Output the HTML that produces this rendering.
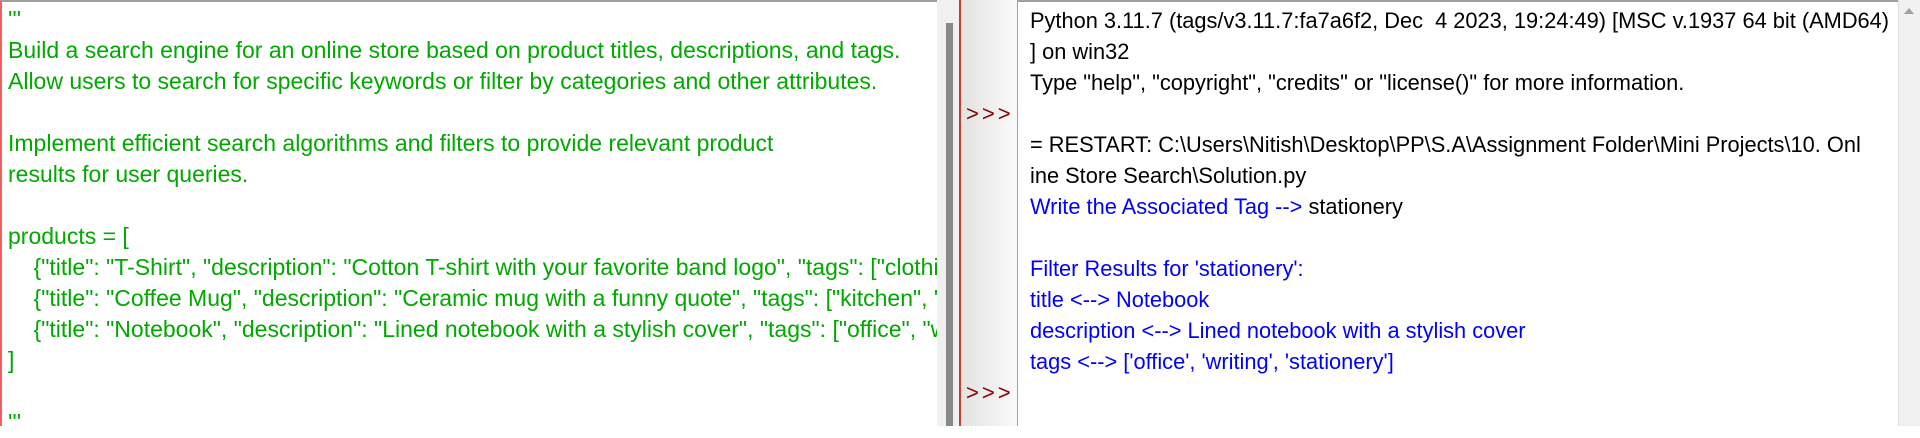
<!DOCTYPE html>
<html><head><meta charset="utf-8"><style>
html,body{margin:0;padding:0;width:1920px;height:426px;overflow:hidden;background:#fff;font-family:"Liberation Sans",sans-serif;font-size:21.8px}
.l{position:absolute;left:0;top:0;width:937px;height:426px;background:#fff;border-top:2px solid #a0a0a0;box-sizing:border-box;border-left:2px solid #f06060}
.ls{position:absolute;left:937px;top:0;width:23px;height:426px;background:#f0f0f0}
.th{position:absolute;left:946px;top:23px;width:7px;height:403px;background:#888}
.red{position:absolute;left:959px;top:0;width:2px;height:426px;background:#c04030}
.g{position:absolute;left:961px;top:0;width:56px;height:426px;background:linear-gradient(90deg,#e2e2e2,#fafafa)}
.bd{position:absolute;left:1017px;top:0;width:1px;height:426px;background:#a0a0a0}
.r{position:absolute;left:1018px;top:0;width:880px;height:426px;background:#fff;border-top:2px solid #a0a0a0;box-sizing:border-box}
.rs{position:absolute;left:1898px;top:0;width:22px;height:426px;background:#f0f0f0;border-left:1px solid #ddd}
.txt{position:absolute;white-space:pre;line-height:31px}
.gr{color:#00a800}.bl{color:#0000ff}.bk{color:#000}
.p{position:absolute;left:966px;color:#8b0000;font-size:22px;letter-spacing:3px;line-height:31px}
</style></head><body>
<div class="l"></div><div class="ls"></div><div class="th"></div><div class="red"></div><div class="g"></div><div class="bd"></div><div class="r"></div><div class="rs"></div>
<svg style="position:absolute;left:1902px;top:6px" width="14" height="10"><path d="M2 8 L7 2 L12 8Z" fill="#a0a0a0"/></svg>
<div class="txt gr" style="left:8px;top:4px;width:929px;overflow:hidden;font-size:23px">'''
Build a search engine for an online store based on product titles, descriptions, and tags.
Allow users to search for specific keywords or filter by categories and other attributes.

Implement efficient search algorithms and filters to provide relevant product
results for user queries.

products = [
    {"title": "T-Shirt", "description": "Cotton T-shirt with your favorite band logo", "tags": ["clothing", "music"]},
    {"title": "Coffee Mug", "description": "Ceramic mug with a funny quote", "tags": ["kitchen", "humor"]},
    {"title": "Notebook", "description": "Lined notebook with a stylish cover", "tags": ["office", "writing", "stationery"]},
]

'''</div>
<div class="txt bk" style="left:1030px;top:5px">Python 3.11.7 (tags/v3.11.7:fa7a6f2, Dec  4 2023, 19:24:49) [MSC v.1937 64 bit (AMD64)
] on win32
Type "help", "copyright", "credits" or "license()" for more information.

= RESTART: C:\Users\Nitish\Desktop\PP\S.A\Assignment Folder\Mini Projects\10. Onl
ine Store Search\Solution.py
<span class="bl">Write the Associated Tag --&gt; </span>stationery
<span class="bl">
Filter Results for 'stationery':
title &lt;--&gt; Notebook
description &lt;--&gt; Lined notebook with a stylish cover
tags &lt;--&gt; ['office', 'writing', 'stationery']</span></div>
<div class="p" style="top:98px">&gt;&gt;&gt;</div>
<div class="p" style="top:377px">&gt;&gt;&gt;</div>
</body></html>
